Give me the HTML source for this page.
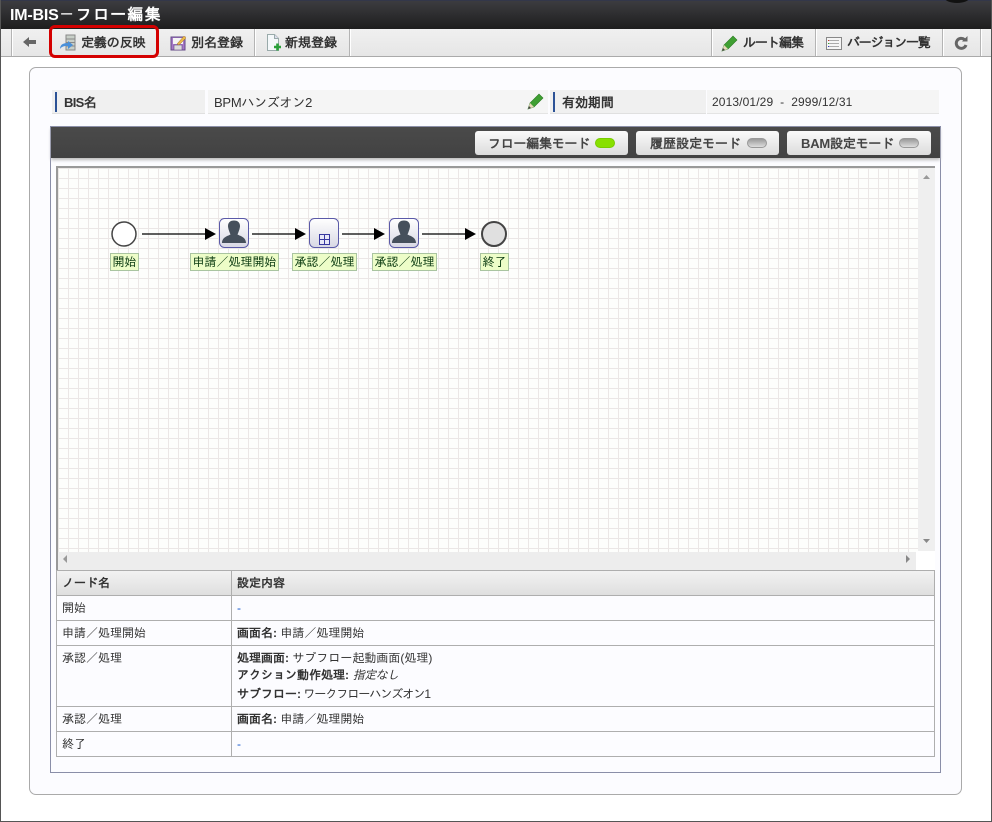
<!DOCTYPE html>
<html lang="ja"><head><meta charset="utf-8"><title>IM-BIS</title>
<style>
html,body{margin:0;padding:0;width:992px;height:822px;overflow:hidden;background:#fff}
body{position:relative;font-family:"Liberation Sans","IPAGothic","Noto Sans CJK JP",sans-serif;font-size:12px;color:#333}
.a{position:absolute;box-sizing:border-box;white-space:nowrap}
.tb{font-weight:bold;font-size:13px;color:#333;top:35px;line-height:16px}
.sep{position:absolute;top:29px;width:1px;height:27px;background:#b4b4b4;box-shadow:1px 0 0 #fff}
.btn{position:absolute;box-sizing:border-box;top:131px;height:24px;border-radius:3px;background:linear-gradient(#fafafa,#dcdcdc);font-weight:bold;font-size:13px;color:#444;line-height:25px;white-space:nowrap}
.led{position:absolute;top:7px;width:20px;height:10px;border-radius:5px;background:linear-gradient(#999,#ddd);border:1px solid #999;box-sizing:border-box}
.lb{position:absolute;top:253px;height:18px;background:#edfdc8;border:1px solid #a9c4a0;box-sizing:border-box;font-size:12px;line-height:16px;text-align:center;white-space:nowrap;color:#0a3a10}
.cell{position:absolute;box-sizing:border-box;white-space:nowrap;font-size:12px;color:#333;line-height:20px}
.h{position:absolute;left:57px;width:878px;height:1px;background:#aeaeae}
b{color:#333}
</style></head><body>
<div class="a" style="left:0;top:0;width:992px;height:29px;background:linear-gradient(#3c3c40,#1e1e1e);border-top:1px solid #33374a"></div>
<div class="a" style="left:10px;top:6px;font-size:16px;font-weight:bold;color:#fff;line-height:19px;letter-spacing:-.2px">IM-BIS<span style="font-weight:normal;letter-spacing:1.2px">－</span><span style="letter-spacing:1.2px">フロー編集</span></div>
<svg class="a" style="left:940px;top:0" width="34" height="4"><ellipse cx="17" cy="-3" rx="13" ry="6" fill="#111"/></svg>

<div class="a" style="left:0;top:29px;width:992px;height:28px;background:linear-gradient(#f0f0f0,#e6e6e6);border-bottom:1px solid #aaa"></div>
<div class="sep" style="left:11px"></div><div class="sep" style="left:254px"></div><div class="sep" style="left:349px"></div>
<div class="sep" style="left:711px"></div><div class="sep" style="left:815px"></div><div class="sep" style="left:942px"></div><div class="sep" style="left:980px"></div>

<svg class="a" style="left:23px;top:36px" width="14" height="12" viewBox="0 0 14 12"><path d="M0 6L6 1V4H13V8H6V11Z" fill="#666"/></svg>
<svg class="a" style="left:59px;top:34px" width="19" height="18" viewBox="0 0 19 18"><rect x="7" y="1" width="9" height="15" fill="#c8cfc8" stroke="#888"/><path d="M7 5H16M7 8.500H16M7 12H16" stroke="#888"/><path d="M1 15C1 10 5 9 9 9V7L14 11L9 15V12C6 12 3 12 1 15Z" fill="#4a90d9"/></svg>
<div class="a tb" style="left:81px;letter-spacing:-.1px">定義の反映</div>
<svg class="a" style="left:170px;top:35px" width="17" height="16" viewBox="0 0 17 16"><rect x="1" y="2" width="14" height="13" fill="#a678c8" stroke="#634a86"/><rect x="4" y="10" width="8" height="5" fill="#ddd" stroke="#634a86" stroke-width=".6"/><rect x="3" y="3" width="10" height="6" fill="#f4f4f4"/><path d="M7 9L14 1L16 3L9 10Z" fill="#e9b84a" stroke="#a0702a" stroke-width=".5"/></svg>
<div class="a tb" style="left:191px">別名登録</div>
<svg class="a" style="left:266px;top:34px" width="16" height="18" viewBox="0 0 16 18"><path d="M1.500 .5H8.500L12.500 4.500V16.500H1.500Z" fill="#f4f8fa" stroke="#9aa"/><path d="M8.500 .5V4.500H12.500" fill="#dde" stroke="#9aa"/><path d="M8 13H15M11.500 9.500V16.500" stroke="#2aa03a" stroke-width="2.600"/></svg>
<div class="a tb" style="left:285px">新規登録</div>
<svg class="a" style="left:721px;top:35px" width="17" height="17" viewBox="0 0 17 17"><path d="M1 16L3 10L12 1L16 5L7 14Z" fill="#3f9f32" stroke="#2a7a22" stroke-width=".6"/><path d="M1 16L3 10L7 14Z" fill="#e8d8b8"/><path d="M1 16L2 13L4 15Z" fill="#444"/></svg>
<div class="a tb" style="left:743px;letter-spacing:-1px">ルート編集</div>
<svg class="a" style="left:826px;top:37px" width="16" height="13" viewBox="0 0 16 13"><rect x=".5" y=".5" width="15" height="12" fill="#f5f5f5" stroke="#888"/><path d="M3 3.500H13M3 6.500H13M3 9.500H13" stroke="#aaa"/><path d="M2 3.500H3" stroke="#c33"/><path d="M2 6.500H3" stroke="#3a3"/><path d="M2 9.500H3" stroke="#33c"/></svg>
<div class="a tb" style="left:847px;letter-spacing:-1.2px">バージョン一覧</div>
<svg class="a" style="left:954px;top:36px" width="14" height="14" viewBox="0 0 14 14"><path d="M12 9A5 5 0 1 1 10.500 3.500" fill="none" stroke="#666" stroke-width="3"/><path d="M8 5.500H13.500V0Z" fill="#666"/></svg>

<div class="a" style="left:49px;top:25px;width:110px;height:33px;border:3px solid #d40000;border-radius:6px"></div>

<div class="a" style="left:29px;top:67px;width:933px;height:728px;border:1px solid #aaa;border-radius:7px;background:#fcfcff"></div>

<div class="a" style="left:52px;top:90px;width:153px;height:24px;background:#f0f0f0;border-bottom:1px solid #e0e0e0"></div>
<div class="a" style="left:55px;top:92px;width:2px;height:20px;background:#2c5296"></div>
<div class="a" style="left:64px;top:95px;font-weight:bold;font-size:13px;line-height:15px;letter-spacing:-.7px">BIS名</div>
<div class="a" style="left:208px;top:90px;width:340px;height:24px;background:#f5f5f5;border-bottom:1px solid #e4e4e4"></div>
<div class="a" style="left:214px;top:95px;font-size:13px;line-height:15px;letter-spacing:-.25px">BPMハンズオン2</div>
<svg class="a" style="left:527px;top:93px" width="17" height="17" viewBox="0 0 17 17"><path d="M1 16L3 10L12 1L16 5L7 14Z" fill="#3f9f32" stroke="#2a7a22" stroke-width=".6"/><path d="M1 16L3 10L7 14Z" fill="#e8d8b8"/><path d="M1 16L2 13L4 15Z" fill="#444"/></svg>
<div class="a" style="left:550px;top:90px;width:156px;height:24px;background:#f0f0f0;border-bottom:1px solid #e0e0e0"></div>
<div class="a" style="left:553px;top:92px;width:2px;height:20px;background:#2c5296"></div>
<div class="a" style="left:562px;top:95px;font-weight:bold;font-size:13px;line-height:15px">有効期間</div>
<div class="a" style="left:707px;top:90px;width:232px;height:24px;background:#f5f5f5;border-bottom:1px solid #e4e4e4"></div>
<div class="a" style="left:712px;top:95px;font-size:12px;line-height:15px;letter-spacing:.12px">2013/01/29&nbsp; -&nbsp; 2999/12/31</div>

<div class="a" style="left:50px;top:126px;width:891px;height:647px;border:1px solid #8a8ea8;background:#fcfcff"></div>
<div class="a" style="left:51px;top:127px;width:889px;height:31px;background:linear-gradient(#4a4a4a,#424242);box-shadow:0 2px 3px #bbb"></div>
<div class="btn" style="left:475px;width:153px;padding-left:13px;letter-spacing:-.25px">フロー編集モード<span class="led" style="left:120px;background:#88e000;border-color:#7c0"></span></div>
<div class="btn" style="left:636px;width:143px;padding-left:14px">履歴設定モード<span class="led" style="left:111px"></span></div>
<div class="btn" style="left:787px;width:144px;padding-left:14px;letter-spacing:-.2px">BAM設定モード<span class="led" style="left:112px"></span></div>

<div class="a" style="left:56px;top:166px;width:879px;height:405px;background:#f0f0f0;border-left:2px solid #999;border-top:2px solid #999"></div>
<div class="a" style="left:58px;top:168px;width:860px;height:384px;background-color:#fdfefc;background-image:linear-gradient(90deg,#ebe7e6 0,#ebe7e6 1px,transparent 1px),linear-gradient(#ebe7e6 0,#ebe7e6 1px,transparent 1px);background-size:10px 10px;background-position:0 0"></div>
<div class="a" style="left:918px;top:168px;width:17px;height:383px;background:#efefef"></div>
<div class="a" style="left:58px;top:552px;width:858px;height:18px;background:#ededed"></div>
<div class="a" style="left:916px;top:551px;width:19px;height:19px;background:#fff"></div>
<svg class="a" style="left:918px;top:168px" width="17" height="383"><path d="M5 11L8.500 7L12 11Z" fill="#999"/><path d="M5 371H12L8.500 375Z" fill="#888"/></svg>
<svg class="a" style="left:58px;top:551px" width="860" height="19"><path d="M9 4L5 8L9 12Z" fill="#999"/><path d="M848 4L852 8L848 12Z" fill="#888"/></svg>

<svg class="a" style="left:58px;top:168px" width="500" height="110">
<defs><linearGradient id="g" x1="0" y1="0" x2="0" y2="1"><stop offset="0" stop-color="#fff"/><stop offset="1" stop-color="#d8d8e4"/></linearGradient></defs>
<circle cx="66" cy="66" r="12" fill="#fff" stroke="#444" stroke-width="1.500"/>
<path d="M84 66H150" stroke="#000" stroke-width="1.200"/><path d="M147 60L158 66L147 72Z" fill="#000"/>
<path d="M194 66H240" stroke="#000" stroke-width="1.200"/><path d="M237 60L248 66L237 72Z" fill="#000"/>
<path d="M284 66H320" stroke="#000" stroke-width="1.200"/><path d="M316 60L327 66L316 72Z" fill="#000"/>
<path d="M364 66H410" stroke="#000" stroke-width="1.200"/><path d="M407 60L418 66L407 72Z" fill="#000"/>
<circle cx="436" cy="66" r="12" fill="#e0e0e0" stroke="#444" stroke-width="2"/>
<rect x="161.500" y="50.500" width="29" height="29" rx="5" fill="url(#g)" stroke="#5a5aa8"/><path d="M164 75C164 69 170 68 172.500 66.500C171 63 170 60 170 58C170 54 173 52.500 176 52.500C179 52.500 182 54 182 58C182 60 181 63 179.500 66.500C182 68 188 69 188 75Z" fill="#46505c"/>
<rect x="251.500" y="50.500" width="29" height="29" rx="5" fill="url(#g)" stroke="#5a5aa8"/>
<rect x="261.500" y="66.500" width="10" height="10" fill="#e8e8f8" stroke="#3838a0"/><path d="M262 71.500H271M266.500 67V76" stroke="#3838a0"/>
<g transform="translate(170 0)"><rect x="161.500" y="50.500" width="29" height="29" rx="5" fill="url(#g)" stroke="#5a5aa8"/><path d="M164 75C164 69 170 68 172.500 66.500C171 63 170 60 170 58C170 54 173 52.500 176 52.500C179 52.500 182 54 182 58C182 60 181 63 179.500 66.500C182 68 188 69 188 75Z" fill="#46505c"/></g>
</svg>
<div class="lb" style="left:110px;width:29px">開始</div>
<div class="lb" style="left:190px;width:89px">申請／処理開始</div>
<div class="lb" style="left:292px;width:65px">承認／処理</div>
<div class="lb" style="left:372px;width:65px">承認／処理</div>
<div class="lb" style="left:480px;width:29px">終了</div>

<div class="a" style="left:57px;top:571px;width:878px;height:25px;background:linear-gradient(#f2f2f2,#dedede)"></div>
<div class="h" style="top:570px"></div><div class="h" style="top:595px"></div><div class="h" style="top:620px"></div><div class="h" style="top:645px"></div><div class="h" style="top:706px"></div><div class="h" style="top:731px"></div><div class="h" style="top:756px"></div>
<div class="a" style="left:56px;top:570px;width:1px;height:187px;background:#aeaeae"></div>
<div class="a" style="left:231px;top:570px;width:1px;height:187px;background:#aeaeae"></div>
<div class="a" style="left:934px;top:570px;width:1px;height:187px;background:#aeaeae"></div>

<div class="cell" style="left:62px;top:573px;font-weight:bold">ノード名</div>
<div class="cell" style="left:237px;top:573px;font-weight:bold">設定内容</div>
<div class="cell" style="left:62px;top:598px">開始</div>
<div class="cell" style="left:237px;top:598px;color:#15c">-</div>
<div class="cell" style="left:62px;top:623px">申請／処理開始</div>
<div class="cell" style="left:237px;top:623px"><b>画面名:</b> 申請／処理開始</div>
<div class="cell" style="left:62px;top:648px">承認／処理</div>
<div class="cell" style="left:237px;top:648px"><b>処理画面:</b> サブフロー起動画面(処理)</div>
<div class="cell" style="left:237px;top:665px"><b>アクション動作処理:</b><i style="margin-left:1px;letter-spacing:-.6px"> 指定なし</i></div>
<div class="cell" style="left:237px;top:684px"><b>サブフロー:</b><span style="letter-spacing:-1px"> ワークフローハンズオン1</span></div>
<div class="cell" style="left:62px;top:709px">承認／処理</div>
<div class="cell" style="left:237px;top:709px"><b>画面名:</b> 申請／処理開始</div>
<div class="cell" style="left:62px;top:734px">終了</div>
<div class="cell" style="left:237px;top:734px;color:#15c">-</div>

<div class="a" style="left:0;top:0;width:1px;height:822px;background:#555"></div>
<div class="a" style="left:991px;top:0;width:1px;height:822px;background:#555"></div>
<div class="a" style="left:0;top:821px;width:992px;height:1px;background:#555"></div>
</body></html>
